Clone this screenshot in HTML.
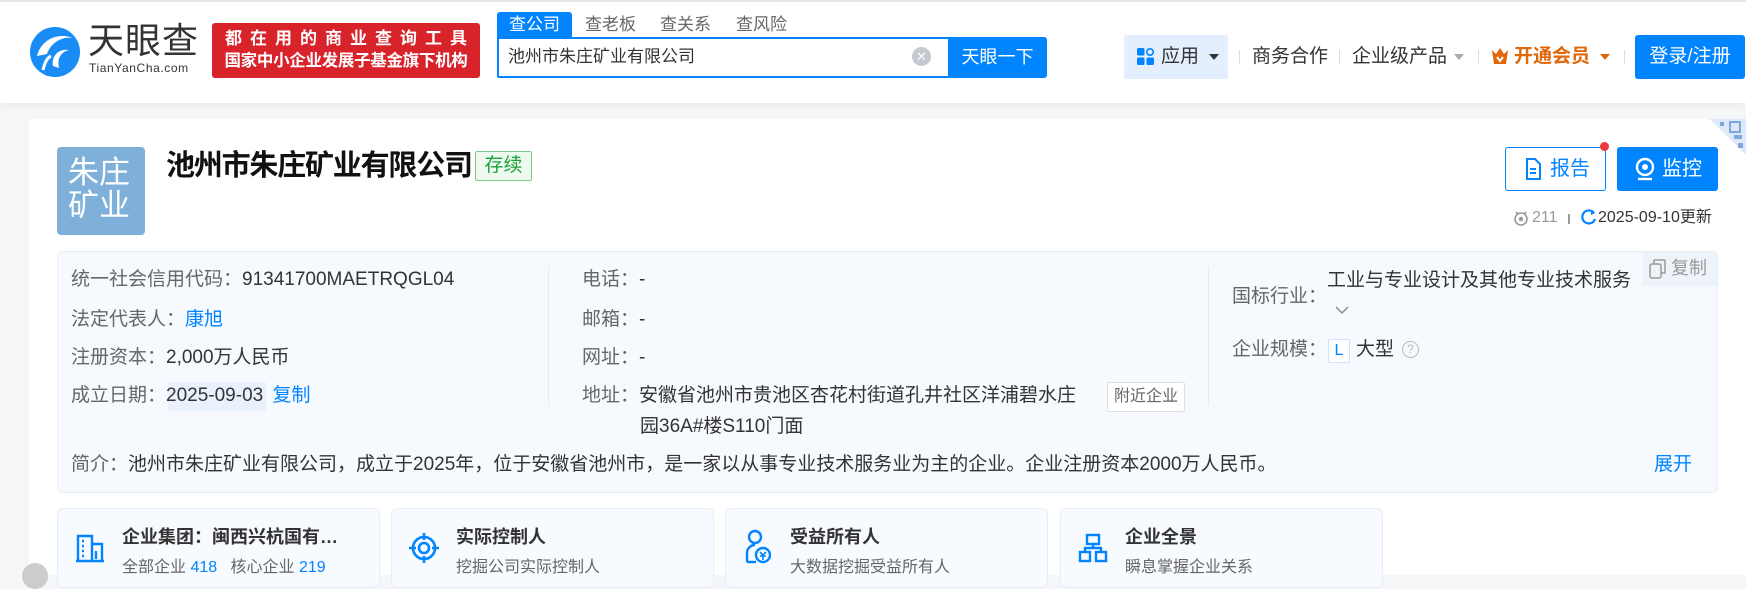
<!DOCTYPE html>
<html><head><meta charset="utf-8"><style>
*{margin:0;padding:0;box-sizing:border-box}
body{width:1746px;height:575px;overflow:hidden;background:#f5f6f7;font-family:"Liberation Sans","Noto Sans CJK SC",sans-serif;color:#333;position:relative}
.a{position:absolute;white-space:nowrap}
.hdr{position:absolute;left:0;top:0;width:1746px;height:103px;background:#fff;border-top:2px solid #e6e6e6;box-shadow:0 2px 6px rgba(0,0,0,.05)}
.card{position:absolute;left:29px;top:119px;width:1717px;height:456px;background:#fff}
.lbl{color:#666}
.info{position:absolute;left:57px;top:251px;width:1661px;height:242px;background:#f6f9fe;border:1px solid #e8eef8;border-radius:6px}
.f18{font-size:19px;line-height:24px}
.mc{position:absolute;top:508px;width:323px;height:80px;background:#f7faff;border:1px solid #e6eefa;border-radius:6px}
.mc .t{position:absolute;left:64px;top:14px;font-size:18px;font-weight:bold;color:#333;white-space:nowrap}
.mc .s{position:absolute;left:64px;top:44px;font-size:16px;color:#666;white-space:nowrap}
.blue{color:#0084ff}
</style></head><body>
<div class="hdr"></div>
<svg class="a" style="left:29px;top:26px" width="52" height="52" viewBox="0 0 52 52">
<circle cx="26" cy="26" r="25" fill="#1a8cf5"/>
<path d="M8 30 C12 14 28 6 44 12 C34 10 22 16 18 28 Z" fill="#fff"/>
<path d="M24 40 C22 30 30 22 40 24 C32 26 28 32 30 42 Z" fill="#fff"/>
<path d="M14 44 C16 36 18 32 22 30" stroke="#fff" stroke-width="3" fill="none"/>
</svg>
<div class="a" style="left:88px;top:21px;font-size:36px;line-height:40px;color:#333;letter-spacing:1px">天眼查</div>
<div class="a" style="left:89px;top:61px;font-size:12px;color:#333;letter-spacing:.6px">TianYanCha.com</div>
<div class="a" style="left:212px;top:23px;width:268px;height:55px;background:#d8232a;border-radius:3px;color:#fff;text-align:center">
<div style="font-size:17px;line-height:23px;margin-top:4px;letter-spacing:8px;padding-left:8px;font-weight:bold">都在用的商业查询工具</div>
<div style="font-size:16.5px;line-height:23px;font-weight:bold;letter-spacing:-0.3px">国家中小企业发展子基金旗下机构</div></div>
<div class="a" style="left:497px;top:12px;width:75px;height:25px;background:#0084ff;color:#fff;font-size:17px;line-height:25px;text-align:center;border-radius:3px 3px 0 0">查公司</div>
<div class="a" style="left:585px;top:12px;font-size:17px;line-height:25px;color:#666">查老板</div>
<div class="a" style="left:660px;top:12px;font-size:17px;line-height:25px;color:#666">查关系</div>
<div class="a" style="left:736px;top:12px;font-size:17px;line-height:25px;color:#666">查风险</div>
<div class="a" style="left:497px;top:37px;width:455px;height:41px;border:2px solid #0084ff;background:#fff;border-radius:0 0 0 2px"></div>
<div class="a" style="left:508px;top:40px;font-size:17px;line-height:34px;color:#333">池州市朱庄矿业有限公司</div>
<div class="a" style="left:912px;top:47px;width:19px;height:19px;border-radius:50%;background:#c5c8cf;color:#fff;font-size:13px;line-height:19px;text-align:center">✕</div>
<div class="a" style="left:948px;top:37px;width:99px;height:41px;background:#0084ff;color:#fff;font-size:18px;line-height:41px;text-align:center;border-radius:0 3px 3px 0">天眼一下</div>
<div class="a" style="left:1124px;top:35px;width:104px;height:44px;background:#e3efff;border-radius:3px"></div>
<svg class="a" style="left:1137px;top:48px" width="17" height="17" viewBox="0 0 17 17"><rect x="0" y="0" width="7.5" height="7.5" rx="1.5" fill="#0084ff"/><circle cx="13" cy="4" r="3.2" fill="none" stroke="#0084ff" stroke-width="1.6"/><rect x="0" y="9.5" width="7.5" height="7.5" rx="1.5" fill="#0084ff"/><rect x="9.5" y="9.5" width="7.5" height="7.5" rx="1.5" fill="#0084ff"/></svg>
<div class="a" style="left:1161px;top:44px;font-size:19px;line-height:26px;color:#333">应用</div>
<div class="a" style="left:1209px;top:54px;border-left:5px solid transparent;border-right:5px solid transparent;border-top:6px solid #333"></div>
<div class="a" style="left:1239px;top:50px;width:1px;height:14px;background:#ddd"></div>
<div class="a" style="left:1252px;top:44px;font-size:19px;line-height:26px;color:#333">商务合作</div>
<div class="a" style="left:1339px;top:50px;width:1px;height:14px;background:#ddd"></div>
<div class="a" style="left:1352px;top:44px;font-size:19px;line-height:26px;color:#333">企业级产品</div>
<div class="a" style="left:1454px;top:54px;border-left:5px solid transparent;border-right:5px solid transparent;border-top:6px solid #aaa"></div>
<div class="a" style="left:1478px;top:50px;width:1px;height:14px;background:#ddd"></div>
<svg class="a" style="left:1491px;top:47px" width="18" height="18" viewBox="0 0 18 18"><path d="M1 3 L5 7 L9 1 L13 7 L17 3 L15 17 L3 17 Z" fill="#e0680a"/><path d="M6 10 L9 14 L12 10" stroke="#fff" stroke-width="2" fill="none"/></svg>
<div class="a" style="left:1514px;top:44px;font-size:19px;line-height:26px;color:#e0680a;font-weight:bold">开通会员</div>
<div class="a" style="left:1600px;top:54px;border-left:5px solid transparent;border-right:5px solid transparent;border-top:6px solid #e0680a"></div>
<div class="a" style="left:1624px;top:50px;width:1px;height:14px;background:#ddd"></div>
<div class="a" style="left:1635px;top:35px;width:110px;height:44px;background:#0084ff;color:#fff;font-size:19px;line-height:44px;text-align:center;border-radius:3px">登录/注册</div>

<div class="card"></div>
<svg class="a" style="left:1710px;top:119px" width="36" height="36" viewBox="0 0 36 36"><path d="M0 0 H36 V36 Z" fill="#dde8f8"/><rect x="20" y="3" width="10" height="10" fill="none" stroke="#7ea8dc" stroke-width="2"/><rect x="10" y="3" width="4" height="4" fill="#7ea8dc"/><rect x="24" y="16" width="8" height="4" fill="#7ea8dc"/><rect x="28" y="24" width="5" height="5" fill="#7ea8dc"/></svg>
<div class="a" style="left:57px;top:147px;height:88px;background:#7eb0d9;border-radius:4px;color:#fff;font-size:31px;line-height:33px;padding:9px 0 0 11px;white-space:normal;width:88px">朱庄<br>矿业</div>
<div class="a" style="left:166px;top:146px;font-size:29px;line-height:40px;font-weight:bold;color:#111;letter-spacing:-1.2px">池州市朱庄矿业有限公司</div>
<div class="a" style="left:475px;top:151px;width:57px;height:30px;border:1px solid #7cc98a;background:#eefaf0;color:#19a33a;font-size:19px;line-height:28px;text-align:center;border-radius:2px">存续</div>
<div class="a" style="left:1505px;top:147px;width:101px;height:44px;border:1px solid #0084ff;border-radius:3px;background:#fff"></div>
<svg class="a" style="left:1525px;top:158px" width="16" height="22" viewBox="0 0 16 22"><path d="M2 1 H10 L15 6 V21 H2 Z" fill="none" stroke="#0084ff" stroke-width="2"/><path d="M5 11 H11 M5 15 H11" stroke="#0084ff" stroke-width="2"/></svg>
<div class="a" style="left:1550px;top:156px;font-size:20px;line-height:26px;color:#0084ff">报告</div>
<div class="a" style="left:1600px;top:142px;width:9px;height:9px;border-radius:50%;background:#f0363d"></div>
<div class="a" style="left:1617px;top:147px;width:101px;height:44px;background:#0084ff;border-radius:3px"></div>
<svg class="a" style="left:1635px;top:157px" width="20" height="24" viewBox="0 0 20 24"><circle cx="10" cy="10" r="8" fill="none" stroke="#fff" stroke-width="2.4"/><circle cx="10" cy="10" r="3" fill="#fff"/><path d="M3 22 H17" stroke="#fff" stroke-width="2.4"/></svg>
<div class="a" style="left:1662px;top:156px;font-size:20px;line-height:26px;color:#fff">监控</div>
<svg class="a" style="left:1513px;top:210px" width="16" height="16" viewBox="0 0 16 16"><circle cx="8" cy="9" r="6" fill="none" stroke="#999" stroke-width="1.6"/><circle cx="8" cy="9" r="2.2" fill="#999"/><path d="M3 2 L5 4 M13 2 L11 4" stroke="#999" stroke-width="1.6"/></svg>
<div class="a" style="left:1532px;top:207px;font-size:16px;line-height:22px;color:#999">211</div>
<div class="a" style="left:1568px;top:214px;width:2px;height:10px;background:#999"></div>
<svg class="a" style="left:1581px;top:208px" width="16" height="18" viewBox="0 0 16 18"><path d="M13 5 A6.5 6.5 0 1 0 14 11" fill="none" stroke="#0084ff" stroke-width="2.2"/><path d="M10 2 L14 5 L10 7" fill="#0084ff"/></svg>
<div class="a" style="left:1598px;top:207px;font-size:16px;line-height:22px;color:#333">2025-09-10更新</div>

<div class="info"></div>
<div class="a" style="left:548px;top:266px;width:1px;height:140px;background:#e6ebf2"></div>
<div class="a" style="left:1208px;top:266px;width:1px;height:140px;background:#e6ebf2"></div>
<div class="a f18" style="left:71px;top:268px"><span class="lbl">统一社会信用代码：</span>91341700MAETRQGL04</div>
<div class="a f18" style="left:71px;top:308px"><span class="lbl">法定代表人：</span><span class="blue">康旭</span></div>
<div class="a f18" style="left:71px;top:346px"><span class="lbl">注册资本：</span>2,000万人民币</div>
<div class="a" style="left:168px;top:382px;width:98px;height:29px;background:#e9f1fc"></div>
<div class="a f18" style="left:71px;top:384px"><span class="lbl">成立日期：</span>2025-09-03 <span class="blue" style="margin-left:4px">复制</span></div>
<div class="a f18" style="left:582px;top:268px"><span class="lbl">电话：</span>-</div>
<div class="a f18" style="left:582px;top:308px"><span class="lbl">邮箱：</span>-</div>
<div class="a f18" style="left:582px;top:346px"><span class="lbl">网址：</span>-</div>
<div class="a f18" style="left:582px;top:384px"><span class="lbl">地址：</span>安徽省池州市贵池区杏花村街道孔井社区洋浦碧水庄</div>
<div class="a f18" style="left:640px;top:415px">园36A#楼S110门面</div>
<div class="a" style="left:1107px;top:382px;width:78px;height:30px;border:1px solid #e0e0e0;background:#fff;border-radius:2px;font-size:16px;line-height:28px;text-align:center;color:#666">附近企业</div>
<div class="a f18" style="left:1232px;top:285px"><span class="lbl">国标行业：</span></div>
<div class="a f18" style="left:1327px;top:269px">工业与专业设计及其他专业技术服务</div>
<svg class="a" style="left:1335px;top:306px" width="14" height="9" viewBox="0 0 14 9"><path d="M1 1 L7 7 L13 1" stroke="#888" stroke-width="1.4" fill="none"/></svg>
<div class="a f18" style="left:1232px;top:338px"><span class="lbl">企业规模：</span></div>
<div class="a" style="left:1328px;top:339px;width:22px;height:24px;border:1px solid #cfe2fb;background:#fff;color:#0084ff;font-size:16px;line-height:22px;text-align:center;border-radius:2px">L</div>
<div class="a f18" style="left:1356px;top:338px">大型</div>
<div class="a" style="left:1402px;top:341px;width:17px;height:17px;border:1.5px solid #bbb;border-radius:50%;color:#bbb;font-size:12px;line-height:14px;text-align:center">?</div>
<div class="a" style="left:1643px;top:252px;width:74px;height:34px;background:#eef3fa;border-radius:0 6px 0 0"></div>
<svg class="a" style="left:1649px;top:259px" width="17" height="20" viewBox="0 0 17 20"><rect x="1" y="5" width="11" height="14" rx="2" fill="none" stroke="#999" stroke-width="1.5"/><path d="M5 5 V2 A1 1 0 0 1 6 1 H15 A1 1 0 0 1 16 2 V14 H12" fill="none" stroke="#999" stroke-width="1.5"/></svg>
<div class="a" style="left:1671px;top:256px;font-size:18px;line-height:24px;color:#999">复制</div>
<div class="a f18" style="left:71px;top:453px"><span class="lbl">简介：</span>池州市朱庄矿业有限公司，成立于2025年，位于安徽省池州市，是一家以从事专业技术服务业为主的企业。企业注册资本2000万人民币。</div>
<div class="a f18 blue" style="left:1654px;top:453px">展开</div>

<div class="mc" style="left:57px"><svg class="a" style="left:17px;top:24px" width="30" height="30" viewBox="0 0 30 30"><path d="M3 28 V3 H17 V28 M17 11 H27 V28 M1 28 H29" fill="none" stroke="#0084ff" stroke-width="2.4"/><path d="M7 8 H9 M7 13 H9 M7 18 H9 M7 23 H9 M21 18 V26" stroke="#0084ff" stroke-width="2.4"/></svg><div class="t">企业集团：闽西兴杭国有…</div><div class="s">全部企业 <span class="blue">418</span>&nbsp;&nbsp;&nbsp;核心企业 <span class="blue">219</span></div></div>
<div class="mc" style="left:391px"><svg class="a" style="left:17px;top:23px" width="30" height="32" viewBox="0 0 30 32"><circle cx="15" cy="16" r="11" fill="none" stroke="#0084ff" stroke-width="2.6"/><circle cx="15" cy="16" r="5" fill="none" stroke="#0084ff" stroke-width="2.6"/><path d="M15 1 V8 M15 24 V31 M0 16 H7 M23 16 H30" stroke="#0084ff" stroke-width="2.6"/></svg><div class="t">实际控制人</div><div class="s">挖掘公司实际控制人</div></div>
<div class="mc" style="left:725px"><svg class="a" style="left:19px;top:20px" width="26" height="36" viewBox="0 0 26 36"><circle cx="10" cy="8" r="6" fill="none" stroke="#0084ff" stroke-width="2.4"/><path d="M2 33 V23 A8 8 0 0 1 10 16" fill="none" stroke="#0084ff" stroke-width="2.4"/><path d="M2 33 H11" stroke="#0084ff" stroke-width="2.4"/><circle cx="18" cy="26" r="7" fill="none" stroke="#0084ff" stroke-width="2.4"/><path d="M15 23 L18 26 L21 23 M18 26 V31 M15 27 H21" stroke="#0084ff" stroke-width="1.6" fill="none"/></svg><div class="t">受益所有人</div><div class="s">大数据挖掘受益所有人</div></div>
<div class="mc" style="left:1060px"><svg class="a" style="left:17px;top:24px" width="30" height="30" viewBox="0 0 30 30"><rect x="9" y="2" width="12" height="9" fill="none" stroke="#0084ff" stroke-width="2.4"/><rect x="2" y="19" width="10" height="9" fill="none" stroke="#0084ff" stroke-width="2.4"/><rect x="18" y="19" width="10" height="9" fill="none" stroke="#0084ff" stroke-width="2.4"/><path d="M15 11 V15 M7 19 V15 H23 V19" fill="none" stroke="#0084ff" stroke-width="2.4"/></svg><div class="t">企业全景</div><div class="s">瞬息掌握企业关系</div></div>
<div class="a" style="left:22px;top:563px;width:26px;height:26px;border-radius:50%;background:#ccc"></div>
</body></html>
